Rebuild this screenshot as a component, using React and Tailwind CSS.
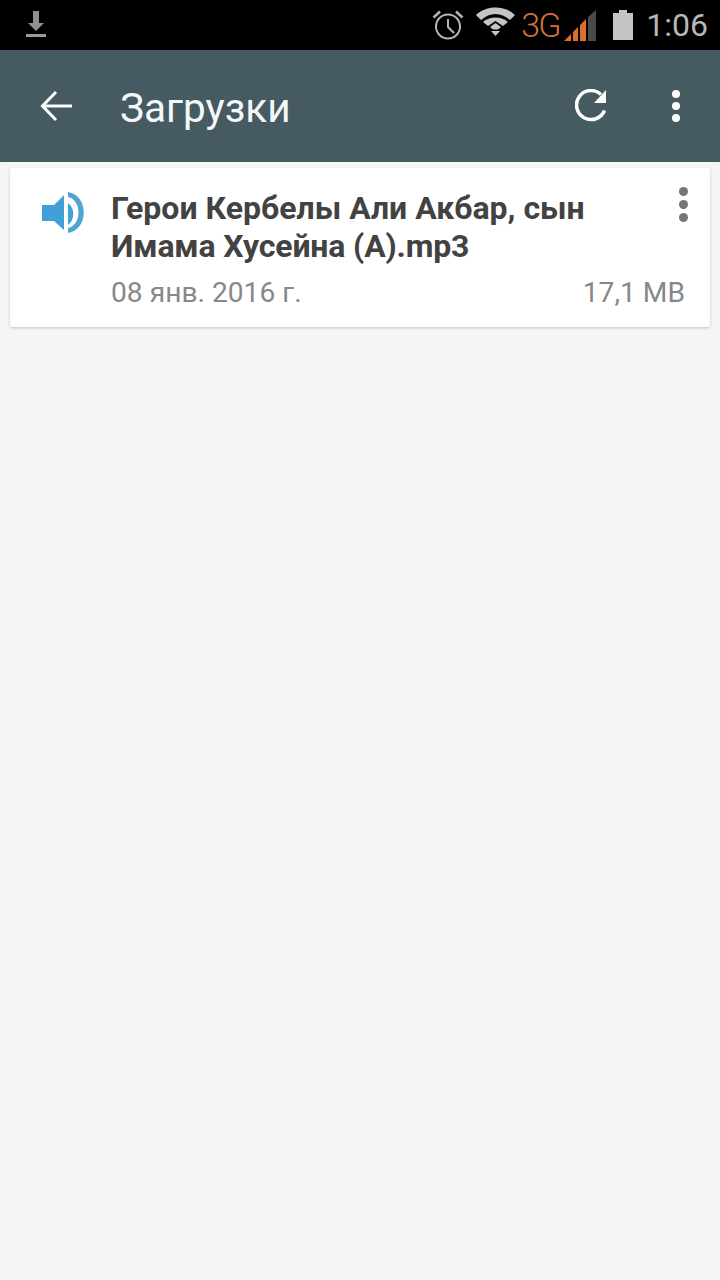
const font = { fontFamily: 'Roboto, sans-serif' };

function StatusBar() {
  return (
    <div className="h-[50px] bg-black flex items-center justify-between pl-[26px] pr-[12px]">
      <svg width="20" height="28" viewBox="0 0 20 28" className="mt-[-1px]">
        <path d="M7 0h6v12h5l-8 8-8-8h5z" fill="#8f8f8f" />
        <rect x="0" y="23" width="20" height="3" fill="#9a9a9a" />
      </svg>
      <div className="flex items-center">
        <svg width="32" height="30" viewBox="0 0 32 30" fill="none" stroke="#b5b5b5">
          <circle cx="16" cy="16.500" r="12" strokeWidth="2" />
          <path d="M16 9v8l6 6" strokeWidth="2" />
          <path d="M1.500 7.500l6.500-6M30.500 7.500l-6.500-6" strokeWidth="2.500" />
        </svg>
        <svg width="39" height="30" viewBox="0 0 39 30" className="ml-[12px] mt-[-6px]" fill="#c4c4c4">
          <path d="M0 8C10-2 29-2 39 8l-5 5C25 5 14 5 5 13z" />
          <path d="M7 15C13 9 26 9 32 15l-5 4-7.500-5L12 19z" />
          <path d="M14 20l5.500-4 5.500 4-3 2.500h-5z" />
          <path d="M15 24h9l-4.500 5z" />
        </svg>
        <span className="ml-[6px] w-[42px] text-[34px] leading-none font-light text-[#d0703c] tracking-[-2px]">3G</span>
        <svg width="32" height="31" viewBox="0 0 32 31" className="ml-[1px]">
          <path d="M0 31l7-7v7z" fill="#d9702c" />
          <path d="M9 22l5-5v14H9z" fill="#d9702c" />
          <path d="M16 15l6-6v22h-6z" fill="#d9702c" />
          <path d="M24 7l8-7v31h-8z" fill="#4a4a4a" />
        </svg>
        <svg width="20" height="30" viewBox="0 0 20 30" className="ml-[17px]">
          <path d="M6 0h8v3h6v27H0V3h6z" fill="#c4c4c4" />
        </svg>
        <span className="ml-[13px] text-[32px] leading-none text-[#b8b8b8]">1:06</span>
      </div>
    </div>
  );
}

function Toolbar() {
  return (
    <div className="h-[112px] bg-[#465a62] flex items-center">
      <svg width="32" height="32" viewBox="0 0 32 32" fill="none" stroke="white" strokeWidth="3" className="ml-[40px]">
        <path d="M32 16H3" />
        <path d="M16 2L2.500 16 16 30" />
      </svg>
      <span className="ml-[48px] mt-[5px] text-[40.500px] leading-none text-[#f5f8f9]">Загрузки</span>
      <svg width="34" height="34" viewBox="0 0 34 34" className="ml-auto" fill="none">
        <path d="M29.500 21.500A14.500 14.500 0 1 1 26 5.500" stroke="white" strokeWidth="3.500" />
        <path d="M31 1v13H19z" fill="white" />
      </svg>
      <div className="ml-[63px] mr-[40px] flex flex-col gap-[4px]">
        <div className="w-[8px] h-[8px] rounded-full bg-white" />
        <div className="w-[8px] h-[8px] rounded-full bg-white" />
        <div className="w-[8px] h-[8px] rounded-full bg-white" />
      </div>
    </div>
  );
}

function DownloadCard() {
  return (
    <div className="mx-[10px] mt-[6px] h-[159px] bg-white rounded-[2px] shadow-[0_1px_3px_rgba(0,0,0,0.2)] flex">
      <svg width="42" height="41" viewBox="0 0 42 41" className="ml-[32px] mt-[24px] shrink-0">
        <path d="M0 13h12L22 3v35L12 29H0z" fill="#42a0d8" />
        <path d="M26 11c7 5 7 17 0 22z" fill="#42a0d8" />
        <path d="M26 0c21 3 21 38 0 41v-5c14-3 14-28 0-31z" fill="#4fa5d2" />
      </svg>
      <div className="ml-[27px] flex-1 pr-[25px] pt-[21px]">
        <div className="flex justify-between">
          <div className="text-[32px] leading-[38px] font-bold text-[#424242] whitespace-nowrap">
            Герои Кербелы Али Акбар, сын
            <br />
            <span className="tracking-[-0.15px]">Имама Хусейна (А).mp3</span>
          </div>
          <div className="mt-[-2px] mr-[-3px] flex flex-col gap-[4px]">
            <div className="w-[9px] h-[9px] rounded-full bg-[#757575]" />
            <div className="w-[9px] h-[9px] rounded-full bg-[#757575]" />
            <div className="w-[9px] h-[9px] rounded-full bg-[#757575]" />
          </div>
        </div>
        <div className="mt-[12px] flex justify-between text-[28.200px] leading-[32px] text-[#888888]">
          <span>08 янв. 2016 г.</span>
          <span>17,1 MB</span>
        </div>
      </div>
    </div>
  );
}

export default function App() {
  return (
    <div className="w-[720px] h-[1280px] bg-[#f5f5f5] overflow-hidden" style={font}>
      <StatusBar />
      <Toolbar />
      <DownloadCard />
    </div>
  );
}
